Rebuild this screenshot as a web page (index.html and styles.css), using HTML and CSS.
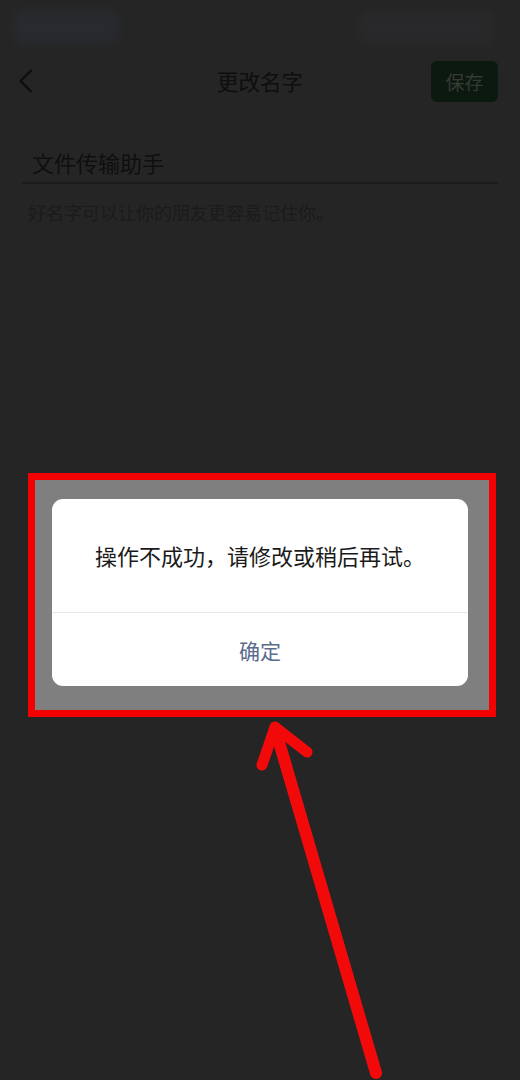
FILE: index.html
```html
<!DOCTYPE html>
<html lang="zh-CN">
<head>
<meta charset="utf-8">
<title>更改名字</title>
<link rel="stylesheet" href="styles.css">
</head>
<body>
<div class="screen">
  <div class="status">
    <div class="blob blob-left"></div>
    <div class="blob blob-right"></div>
  </div>
  <div class="nav">
    <div class="back">
      <svg width="16" height="24" viewBox="0 0 16 24"><polyline points="13,1.5 2.5,12 13,22.5" fill="none" stroke="#0d0d0d" stroke-width="2.2" stroke-linecap="round" stroke-linejoin="round"/></svg>
    </div>
    <div class="title">更改名字</div>
    <div class="save">保存</div>
  </div>
  <div class="field">
    <div class="field-text">文件传输助手</div>
  </div>
  <div class="hint">好名字可以让你的朋友更容易记住你。</div>

  <div class="mark">
    <div class="dialog">
      <div class="msg">操作不成功，请修改或稍后再试。</div>
      <div class="btn">确定</div>
    </div>
  </div>

  <svg class="arrow" width="520" height="1080" viewBox="0 0 520 1080">
    <line x1="277" y1="735" x2="376" y2="1073" stroke="#f20a0a" stroke-width="12" stroke-linecap="round"/>
    <polyline points="262,765 275,727 307,752" fill="none" stroke="#f20a0a" stroke-width="11" stroke-linecap="round" stroke-linejoin="round"/>
  </svg>
</div>
</body>
</html>
```
FILE: styles.css
```css
* { box-sizing: border-box; }
html, body { margin: 0; padding: 0; }
body {
  background: #252525;
  font-family: "Noto Sans CJK SC", "Noto Sans", sans-serif;
}
.screen {
  position: relative;
  width: 520px;
  height: 1080px;
  background: #252525;
  overflow: hidden;
}
.status {
  height: 56px;
  display: flex;
  justify-content: space-between;
  padding: 10px 27px 0 14px;
}
.blob {
  height: 34px;
  filter: blur(5px);
  border-radius: 4px;
}
.blob-left {
  width: 104px;
  background: #282a2d;
}
.blob-right {
  width: 133px;
  background: #29292b;
}
.nav {
  height: 50px;
  display: flex;
  align-items: center;
  justify-content: space-between;
  padding: 0 22px 0 18px;
  position: relative;
}
.back {
  width: 16px;
  height: 24px;
  display: flex;
}
.title {
  position: absolute;
  left: 0;
  right: 0;
  text-align: center;
  font-size: 21.5px;
  color: #0e0e0e;
  line-height: 50px;
  pointer-events: none;
}
.save {
  width: 67px;
  height: 41px;
  border-radius: 6px;
  background: #0c190f;
  color: #363a37;
  font-size: 19px;
  display: flex;
  align-items: center;
  justify-content: center;
}
.field {
  margin: 0 22px;
  height: 78px;
  border-bottom: 2px solid #1b1b1b;
  display: flex;
  align-items: flex-end;
  padding: 0 0 5px 10px;
}
.field-text {
  font-size: 22px;
  color: #0f0f0f;
  line-height: 30px;
}
.hint {
  padding: 16px 0 0 28px;
  font-size: 18px;
  color: #1b1b1b;
  line-height: 24px;
}
.mark {
  position: absolute;
  left: 28px;
  top: 473px;
  width: 468px;
  height: 244px;
  border: 7px solid #f50000;
  background: #7f7f7f;
  padding: 19px 21px 23px 17px;
}
.dialog {
  background: #ffffff;
  border-radius: 11px;
  height: 187px;
  display: flex;
  flex-direction: column;
}
.msg {
  height: 114px;
  display: flex;
  align-items: center;
  justify-content: center;
  font-size: 22px;
  color: #1a1a1a;
  border-bottom: 1px solid #e6e6e6;
  padding-bottom: 1px;
}
.btn {
  flex: 1;
  display: flex;
  align-items: center;
  justify-content: center;
  font-size: 21px;
  color: #5a6b8c;
}
.arrow {
  position: absolute;
  left: 0;
  top: 0;
  pointer-events: none;
}
```
